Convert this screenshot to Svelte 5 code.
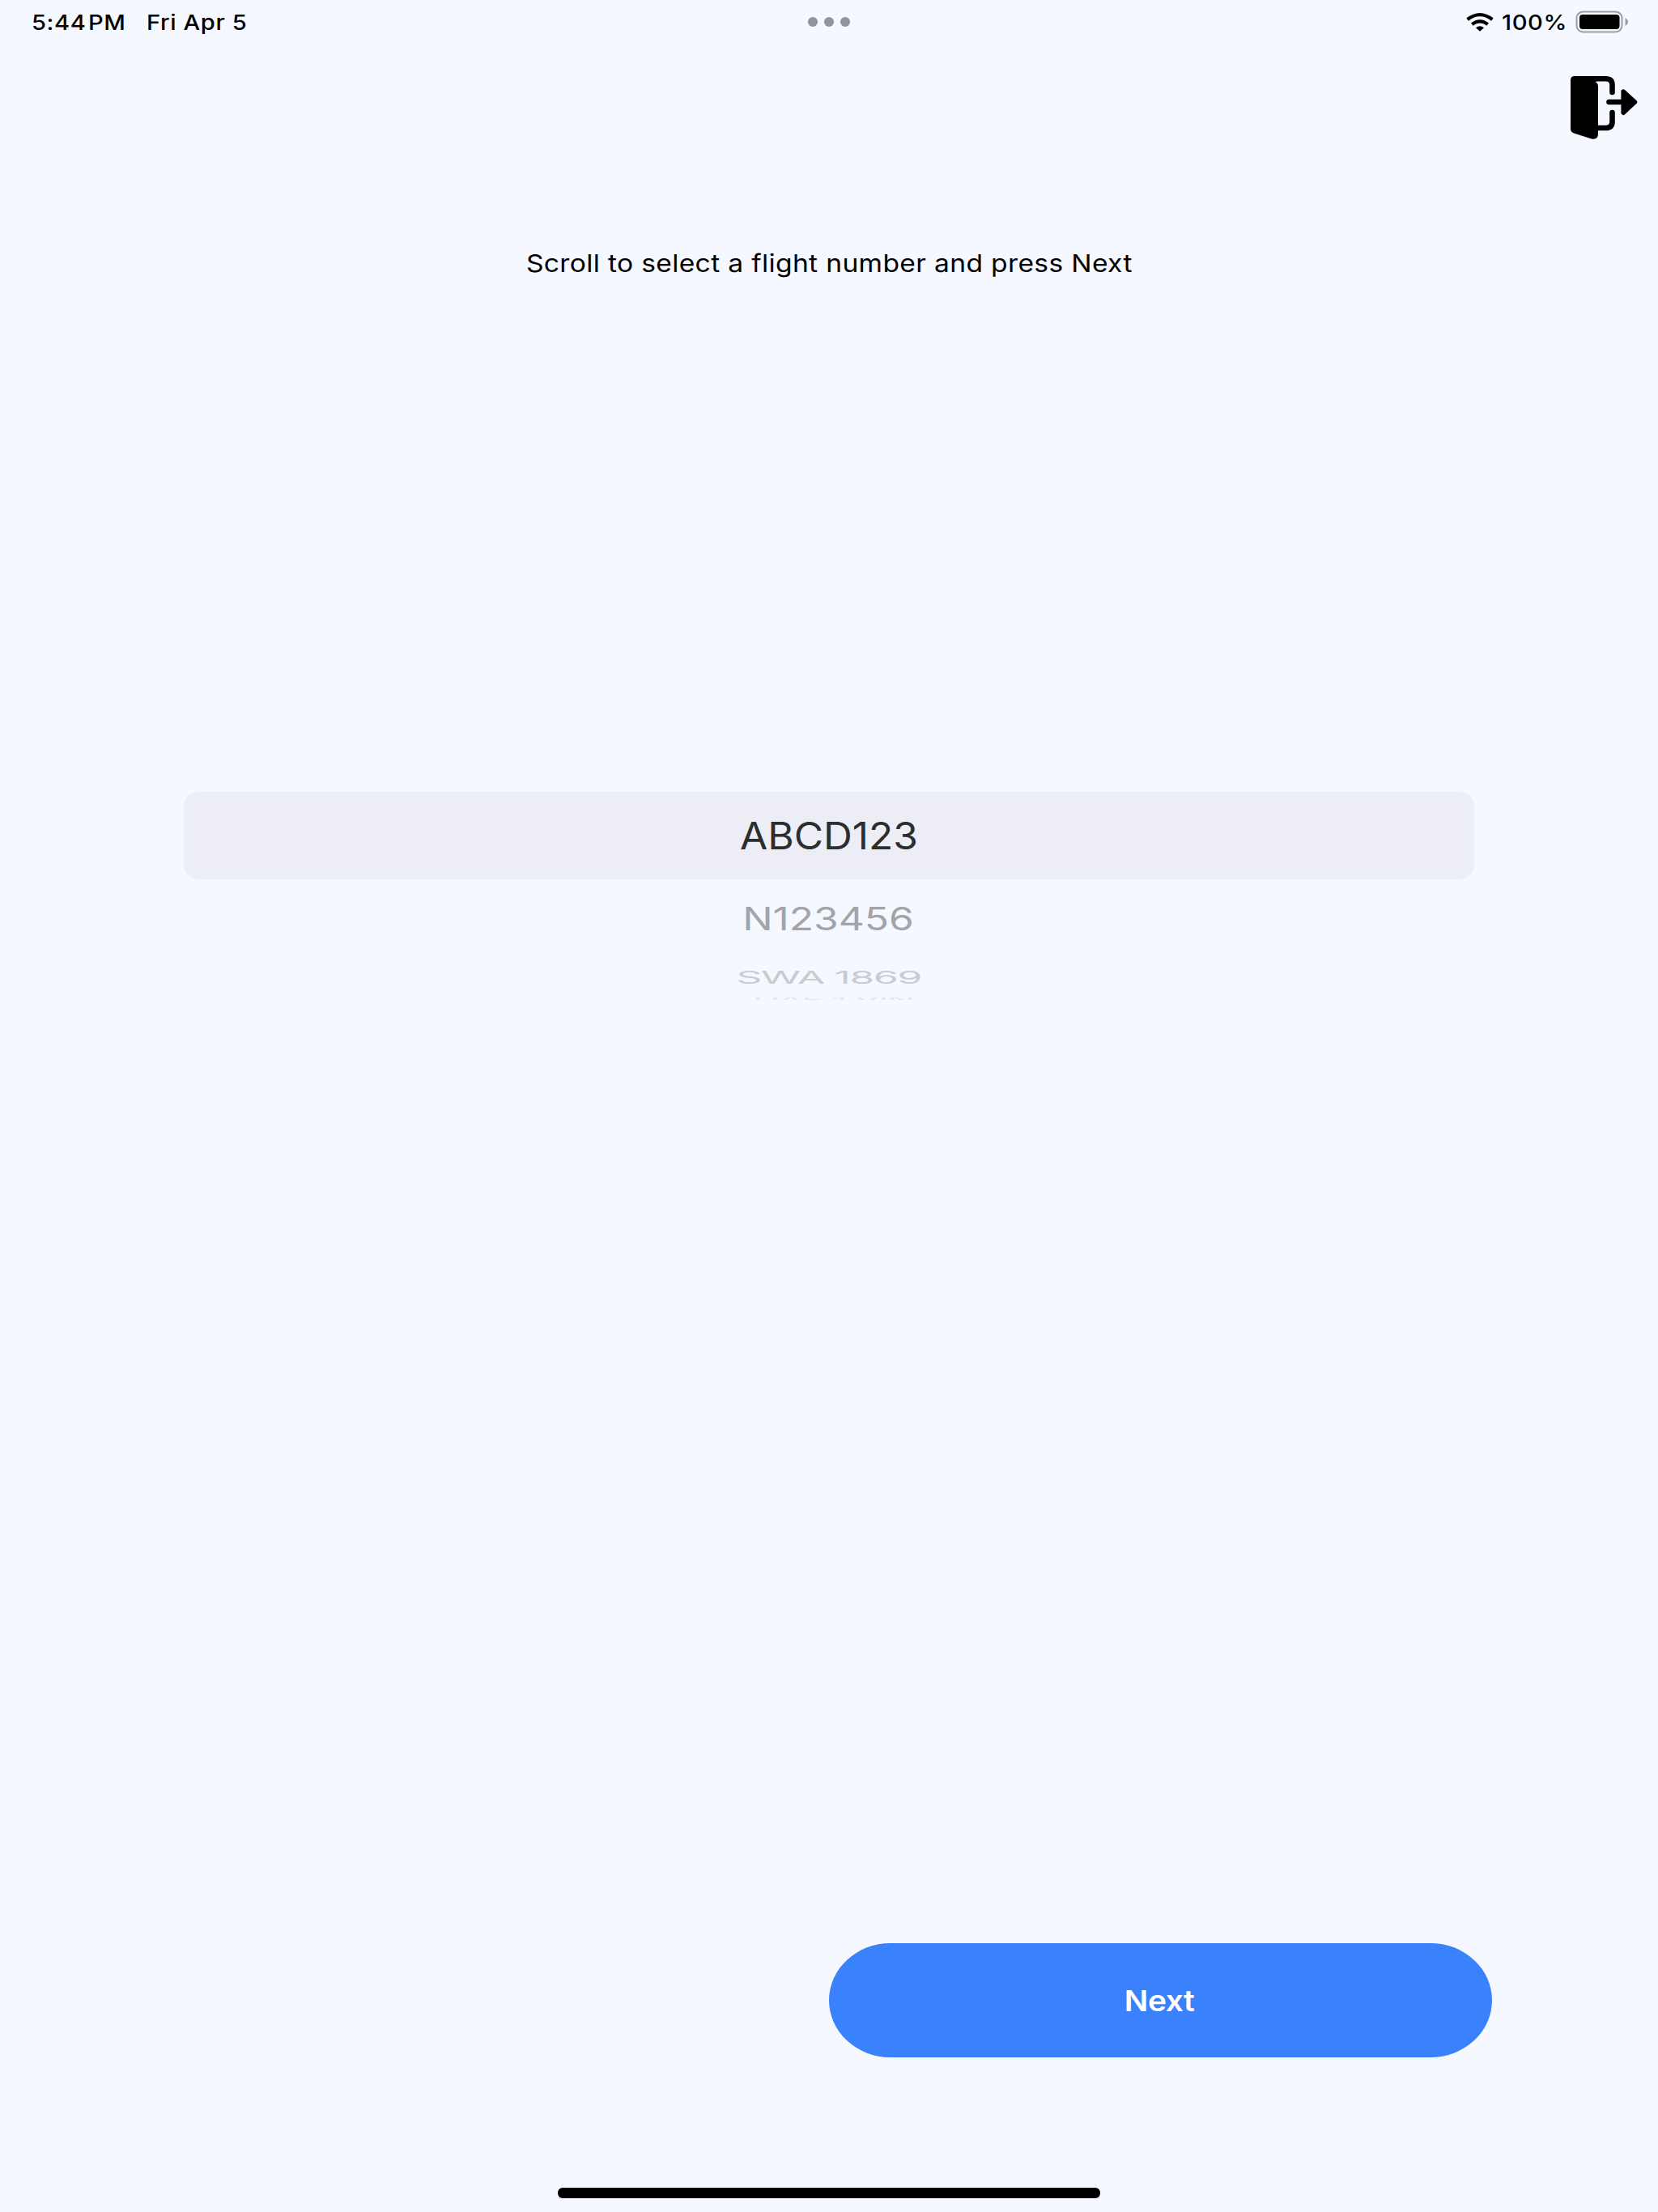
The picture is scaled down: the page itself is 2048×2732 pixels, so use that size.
<script>
    let time = '5:44';
    let period = 'PM';
    let date = 'Fri Apr 5';
    let battery = 100;

    let flights = ['ABCD123', 'N123456', 'SWA 1869', 'UAE 1 VIN'];
    let selected = 0;
</script>

<style>
    :global(body) {
        background-color: #f5f8ff;
    }

    .screen {
        display: flex;
        flex-direction: column;
        box-sizing: border-box;
        height: 2732px;
        overflow: hidden;
        background-color: #f5f8ff;
        color: #000;
        font-family: Inter, "Liberation Sans", sans-serif;
    }

    .screen span {
        display: inline-block;
        white-space: pre;
    }

    .statusBar {
        display: grid;
        grid-template-columns: 1fr auto 1fr;
        align-items: center;
        height: 54px;
        padding: 0 36px 0 39px;
        font-size: 26px;
        font-weight: 460;
        letter-spacing: 0.55px;
    }

    .statusBar span {
        transform: scaleX(1.12);
        transform-origin: left;
    }

    .clock,
    .indicators {
        display: flex;
        align-items: center;
    }

    .clock span:nth-child(1) {
        width: 70px;
    }

    .clock span:nth-child(2) {
        width: 71.5px;
    }

    .dots {
        display: flex;
        gap: 8px;
        margin-right: 3px;
    }

    .dots i {
        width: 12px;
        height: 11.5px;
        border-radius: 50%;
        background-color: #92959f;
    }

    .indicators {
        justify-content: flex-end;
    }

    .indicators span {
        width: 80px;
        margin: 0 11px 0 10px;
    }

    .toolbar {
        display: flex;
        justify-content: flex-end;
        height: 126px;
        padding: 40px 25px 0 0;
        box-sizing: border-box;
    }

    .toolbar button {
        width: 83px;
        height: 78px;
        padding: 0;
        border: 0;
        background: none;
    }

    svg {
        display: block;
    }

    .prompt {
        margin: 125px 0 0;
        height: 40px;
        line-height: 40px;
        text-align: center;
        font-size: 30px;
        letter-spacing: 0.3px;
    }

    .prompt span {
        transform: scaleX(1.12);
    }

    .picker {
        margin: 633px 227px 0;
        font-size: 46px;
        line-height: 56px;
    }

    .row {
        display: flex;
        align-items: center;
        justify-content: center;
    }

    .row.selected {
        height: 107.5px;
        border-radius: 19px / 17px;
        background-color: #ecedf5;
        color: #2b2d2f;
    }

    .row.selected span {
        transform: scaleX(1.078);
    }

    .row.below1 {
        height: 96px;
        margin-bottom: 2px;
        color: #a2a4a9;
    }

    .row.below1 span {
        margin-right: 2px;
        transform: scale(1.08, 0.86);
    }

    .row.below2 {
        height: 47px;
        color: #cacbd0;
        letter-spacing: -1.2px;
    }

    .row.below2 span {
        margin-right: 1px;
        transform: scale(1.08, 0.46);
    }

    /* only the top edge of the last row shows before the wheel turns away */
    .row.below3 {
        align-items: flex-start;
        height: 3px;
        margin-top: 1.5px;
        overflow: hidden;
        color: #e3e5eb;
        letter-spacing: -1.5px;
    }

    .row.below3 span {
        margin-left: 10px;
        transform: translateY(-2px) scale(0.98, 0.18);
        transform-origin: top;
    }

    .actions {
        display: flex;
        justify-content: flex-end;
        margin-top: auto;
        padding: 0 205px 161px 0;
    }

    .next {
        width: 819px;
        height: 141px;
        padding: 0;
        border: 0;
        border-radius: 76px / 70.5px;
        background-color: #3982fc;
        color: #fff;
        font: 600 36px Inter, "Liberation Sans", sans-serif;
        letter-spacing: -0.4px;
    }

    .next span {
        margin-right: 2px;
        transform: scaleX(1.08);
    }

    .home {
        width: 670px;
        height: 12.5px;
        margin: 0 auto 17.5px;
        border-radius: 6px;
        background-color: #000;
    }
</style>

<div class="screen">
    <div class="statusBar">
        <div class="clock">
            <span>{time}</span>
            <span>{period}</span>
            <span>{date}</span>
        </div>
        <div class="dots"><i></i><i></i><i></i></div>
        <div class="indicators">
            <svg width="34" height="23" viewBox="0 0 34 23">
                <path d="M1.6 8.2Q17 -3.8 32.4 8.2M7.3 14.2Q17 6.5 26.7 14.2" fill="none" stroke="#000" stroke-width="4.2" />
                <path d="M12 18.3Q17 14 22 18.3L17 22.8z" />
            </svg>
            <span>{battery}%</span>
            <svg width="66" height="28" viewBox="0 0 66 28">
                <rect x="1.5" y="1.5" width="56" height="25" rx="8" ry="7.5" fill="none" stroke="#9c9ea4" stroke-width="2" />
                <rect x="5" y="5" width={49.5 * battery / 100} height="18" rx="4" />
                <path d="M61.5 9.2Q65 11 65 14T61.5 18.8z" fill="#9c9ea4" />
            </svg>
        </div>
    </div>

    <div class="toolbar">
        <button aria-label="Exit">
            <svg width="83" height="78" viewBox="10 9 83 78">
                <path d="M15 9H42V16L40 16Q44 17 44 22V80Q44 88 36 86.5L14 79.5Q10 78 10 74V14Q10 9 15 9z" />
                <path d="M20 12.3H53.5Q61.5 12.3 61.5 20V29M61.5 54V65.5Q61.5 73 53.5 73H40M57.5 41H76" fill="none" stroke="#000" stroke-width="6.6" stroke-linecap="round" stroke-linejoin="round" />
                <path d="M75.2 28L89.4 41L75.2 54.2z" stroke="#000" stroke-width="5.6" stroke-linejoin="round" />
            </svg>
        </button>
    </div>

    <p class="prompt"><span>Scroll to select a flight number and press Next</span></p>

    <div class="picker">
        {#each flights as flight, i}
            <div class={'row ' + (i == selected ? 'selected' : 'below' + (i - selected))}>
                <span>{flight}</span>
            </div>
        {/each}
    </div>

    <div class="actions">
        <button class="next"><span>Next</span></button>
    </div>
    <div class="home"></div>
</div>
